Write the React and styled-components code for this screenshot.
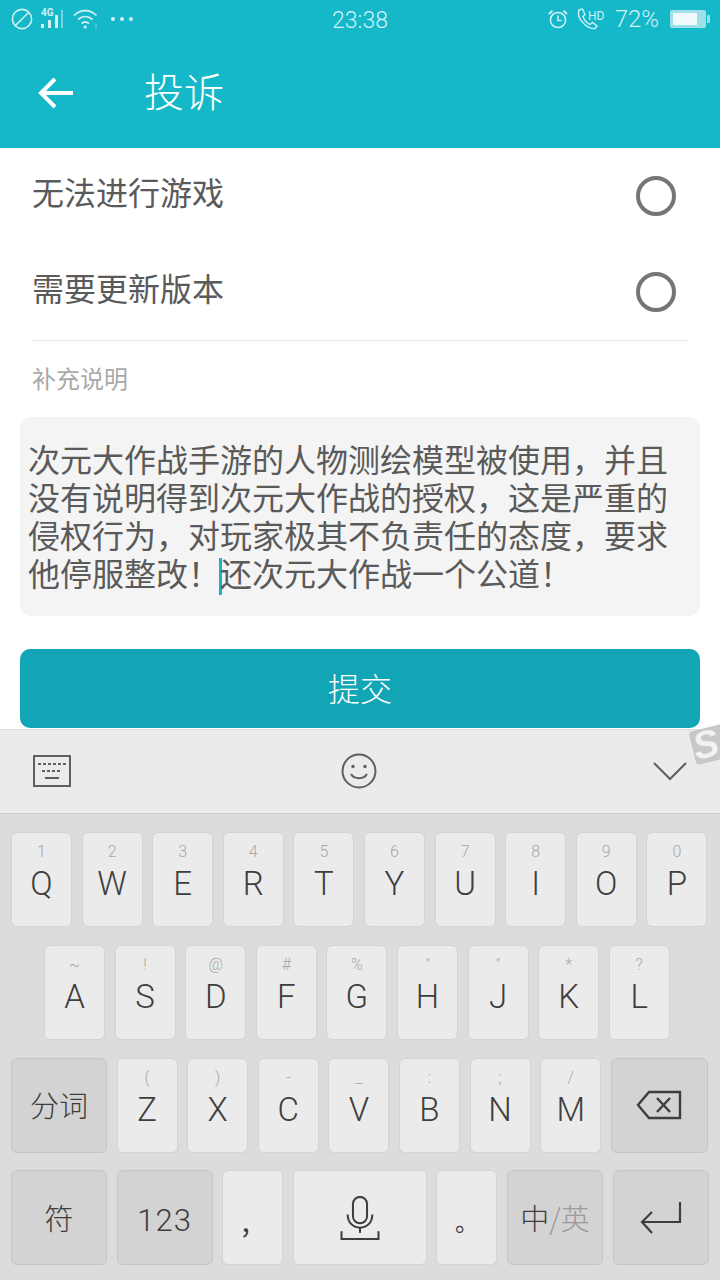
import React from 'react';
import styled, { createGlobalStyle } from 'styled-components';

const cjk = '"Noto Sans CJK SC", "Noto Sans", sans-serif';

const Global = createGlobalStyle`
  html, body {
    margin: 0;
    padding: 0;
    background: #fff;
  }
`;

const Page = styled.div`
  position: relative;
  display: flex;
  flex-direction: column;
  width: 720px;
  height: 1280px;
  overflow: hidden;
  background: #fff;
  font-family: ${cjk};
`;

const Header = styled.header`
  height: 148px;
  background: #14b8c8;
  color: #fff;
`;

const StatusBar = styled.div`
  display: grid;
  grid-template-columns: 1fr auto 1fr;
  align-items: center;
  height: 38px;
  color: #d3f1f5;
`;

const StatusLeft = styled.div`
  display: flex;
  align-items: center;
  gap: 7px;
  padding-left: 11px;
`;

const StatusRight = styled.div`
  display: flex;
  align-items: center;
  justify-content: flex-end;
  padding-right: 10px;
`;

const Time = styled.span`
  font: 300 23px/38px Roboto, sans-serif;
  position: relative;
  top: 2px;
`;

const Percent = styled.span`
  font: 300 24px/38px Roboto, sans-serif;
  margin: 0 11px 0 9px;
`;

const TitleBar = styled.div`
  display: flex;
  align-items: center;
  height: 110px;
  padding-left: 38px;
`;

const Title = styled.h1`
  margin: 0 0 6px 70px;
  font-size: 40px;
  font-weight: 300;
  line-height: 50px;
  letter-spacing: 0;
`;

const Options = styled.div`
  margin: 0 32px;
  border-bottom: 1px solid #e6e6e6;
`;

const Option = styled.div`
  display: flex;
  align-items: center;
  justify-content: space-between;
  height: 96px;
  padding-right: 12px;
  color: #5a5a5a;
  font-size: 32px;
`;

const OptionText = styled.span`
  line-height: 44px;
  margin-bottom: 11px;
  font-weight: 400;
`;

const Radio = styled.span`
  box-sizing: border-box;
  width: 40px;
  height: 40px;
  border: 4px solid #757575;
  border-radius: 50%;
`;

const Label = styled.div`
  box-sizing: border-box;
  margin-left: 32px;
  height: 76px;
  padding-bottom: 4px;
  display: flex;
  align-items: center;
  color: #a9a9a9;
  font-size: 24px;
  font-weight: 400;
`;

const Feedback = styled.div`
  box-sizing: border-box;
  height: 199px;
  margin: 0 20px;
  padding: 22px 8px 0;
  border-radius: 10px;
  background: #f4f4f4;
  color: #5a5a5a;
  font-size: 32px;
  font-weight: 400;
  line-height: 38px;
`;

const FeedbackLine = styled.div`
  white-space: nowrap;
`;

const Caret = styled.span`
  display: inline-block;
  width: 3px;
  height: 37px;
  margin: 0 -2px 0 -1px;
  background: #18b4c4;
  vertical-align: -9px;
`;

const Submit = styled.button`
  display: block;
  height: 79px;
  margin: 33px 20px 0;
  padding: 0 0 4px;
  border: 0;
  border-radius: 10px;
  background: #11a5b5;
  color: #fff;
  font-family: ${cjk};
  font-size: 32px;
  font-weight: 300;
`;

const Keyboard = styled.div`
  flex: 1;
  margin-top: 1px;
  background: #dcdcdc;
`;

const Toolbar = styled.div`
  display: flex;
  align-items: center;
  justify-content: space-between;
  box-sizing: border-box;
  height: 85px;
  padding: 0 33px 2px;
  background: #ebebeb;
  border-top: 1px solid #dcdcdc;
  border-bottom: 1px solid #cdcdcd;
`;

const Rows = styled.div`
  display: flex;
  flex-direction: column;
  gap: 17.7px;
  padding-top: 18.4px;
`;

const KeyRow = styled.div`
  display: flex;
  gap: 9.6px;
  height: 95px;
  padding: 0 0 0 ${(p) => p.$left || 11}px;
`;

const Key = styled.div`
  box-sizing: border-box;
  flex: 0 0 ${(p) => p.$w || 61}px;
  display: flex;
  flex-direction: column;
  align-items: center;
  justify-content: ${(p) => (p.$center ? 'center' : 'flex-start')};
  border: 1px solid ${(p) => (p.$dark ? '#c6c6c6' : '#d3d3d3')};
  border-radius: 6px;
  background: ${(p) => (p.$dark ? '#d3d3d3' : '#ebebeb')};
  color: #3e3e3e;
`;

const Sub = styled.span`
  height: 20px;
  margin-top: 9px;
  color: #a8a8a8;
  font: 300 16px/20px Roboto, sans-serif;
`;

const Letter = styled.span`
  margin-top: 2px;
  font: 300 33px/40px Roboto, sans-serif;
`;

const KeyText = styled.span`
  font-size: 29px;
  font-weight: 300;
  line-height: 40px;
  margin-bottom: 2px;
`;

const Digits = styled.span`
  font: 300 31px/40px Roboto, sans-serif;
  letter-spacing: 1px;
  margin-top: 7px;
`;

const Comma = styled.span`
  font-size: 30px;
  line-height: 40px;
  margin: 2px 14px 0 0;
`;

const FullStop = styled.span`
  font-size: 24px;
  line-height: 40px;
  margin-top: 6px;
`;

const Muted = styled.span`
  color: #9a9a9a;
`;

const SogouBadge = styled.div`
  position: absolute;
  top: 727px;
  left: 692px;
  width: 38px;
  height: 34px;
  border-radius: 3px;
  background: #c8c8c8;
  transform: rotate(-14deg);
  color: #f2f2f2;
  font: italic 700 38px/32px "Liberation Sans", sans-serif;
  padding-left: 1px;
  overflow: hidden;
`;

const NoDisturbIcon = () => (
  <svg width="22" height="22" viewBox="0 0 22 22" fill="none" stroke="currentColor" strokeWidth="1.6">
    <circle cx="11" cy="11" r="9.6" />
    <path d="M4.2 17.8 17.8 4.2" />
  </svg>
);

const SignalIcon = () => (
  <svg width="26" height="22" viewBox="0 0 26 22" fill="currentColor">
    <text x="1" y="8" fontSize="10" fontWeight="700" fontFamily="Roboto, sans-serif">4G</text>
    <rect x="1" y="16" width="3" height="4" />
    <rect x="8" y="12" width="3" height="8" />
    <rect x="15" y="7" width="3" height="13" />
    <rect x="21" y="2" width="2" height="18" opacity="0.5" />
  </svg>
);

const WifiIcon = () => (
  <svg width="26" height="22" viewBox="0 0 26 22" fill="none" stroke="currentColor" strokeWidth="1.7">
    <path d="M1 7.5C7.5 1 17 1 23.5 7.5" />
    <path d="M5 11.5C9.5 7.5 15 7.5 19.5 11.5" />
    <path d="M8.5 15.5C11 13.5 13.5 13.5 16 15.5" />
    <circle cx="12.2" cy="19" r="1.6" fill="currentColor" stroke="none" />
    <path d="M22 17h2M22 20h2" strokeWidth="1" opacity="0.6" />
  </svg>
);

const MoreDots = () => (
  <svg width="24" height="6" viewBox="0 0 24 6" fill="currentColor" style={{ marginLeft: 4 }}>
    <circle cx="3" cy="3" r="2" />
    <circle cx="12" cy="3" r="2" />
    <circle cx="21" cy="3" r="2" />
  </svg>
);

const AlarmIcon = () => (
  <svg width="20" height="20" viewBox="0 0 20 20" fill="none" stroke="currentColor" strokeWidth="1.5">
    <circle cx="10" cy="11" r="7.6" />
    <path d="M10 6.5V11.5H13.5" />
    <path d="M1 5 4.5 1.6M19 5 15.5 1.6" strokeWidth="1.9" />
  </svg>
);

const CallHdIcon = () => (
  <svg width="30" height="22" viewBox="0 0 30 22" fill="none" stroke="currentColor" strokeWidth="1.4" style={{ marginLeft: 8 }}>
    <path d="M3 2 6.5 1 9 6.5 7 8.5C8 11.5 11 15 14 16.5L16.5 14.5 21 18 19 20.5C11 21.5 0 10 3 2Z" />
    <text x="12" y="12" fontSize="12" fontFamily="Roboto, sans-serif" fill="currentColor" stroke="none">HD</text>
  </svg>
);

const BatteryIcon = () => (
  <svg width="40" height="18" viewBox="0 0 40 18">
    <rect x="0" y="0" width="36" height="18" rx="2" fill="#9fe0e8" />
    <rect x="3" y="3" width="24" height="12" fill="#eefafb" />
    <rect x="37" y="5" width="3" height="8" rx="1" fill="#9fe0e8" />
  </svg>
);

const BackArrow = () => (
  <svg width="36" height="32" viewBox="0 0 36 32" fill="none" stroke="#fff" strokeWidth="4">
    <path d="M35 16H3" />
    <path d="M17 2 3 16 17 30" />
  </svg>
);

const KeyboardIcon = () => (
  <svg width="38" height="32" viewBox="0 0 38 32" fill="none" stroke="#5f5f5f">
    <rect x="1" y="1" width="36" height="30" strokeWidth="2" />
    <path d="M5 9H33" strokeWidth="2" strokeDasharray="3 2" />
    <path d="M9 16H29" strokeWidth="2" strokeDasharray="3 2" />
    <path d="M12 23H26" strokeWidth="2" />
  </svg>
);

const SmileIcon = () => (
  <svg width="36" height="36" viewBox="0 0 36 36" fill="none" stroke="#5f5f5f" strokeWidth="2" style={{ marginRight: 6 }}>
    <circle cx="18" cy="18" r="16.5" />
    <circle cx="12" cy="13.5" r="1.7" fill="#5f5f5f" stroke="none" />
    <circle cx="24" cy="13.5" r="1.7" fill="#5f5f5f" stroke="none" />
    <path d="M10 21C13 26.5 23 26.5 26 21" />
  </svg>
);

const ChevronIcon = () => (
  <svg width="34" height="20" viewBox="0 0 34 20" fill="none" stroke="#5f5f5f" strokeWidth="2">
    <path d="M1 2 17 18 33 2" />
  </svg>
);

const BackspaceIcon = () => (
  <svg width="46" height="30" viewBox="0 0 46 30" fill="none" stroke="#3e3e3e" strokeWidth="2.4">
    <path d="M44 2H13L2 15 13 28H44Z" />
    <path d="M21 8 34 22M34 8 21 22" />
  </svg>
);

const MicIcon = () => (
  <svg width="44" height="44" viewBox="0 0 46 50" fill="none" stroke="#3e3e3e" strokeWidth="2.3">
    <rect x="15" y="1" width="16" height="30" rx="8" />
    <path d="M9 21C9 41 37 41 37 21" />
    <path d="M23 36V42" />
    <path d="M2 40V49H44V40" />
  </svg>
);

const EnterIcon = () => (
  <svg width="42" height="34" viewBox="0 0 42 34" fill="none" stroke="#3e3e3e" strokeWidth="2.2">
    <path d="M40 1V21H3" />
    <path d="M12 11 2 21 12 32" />
  </svg>
);

const row1 = [['1', 'Q'], ['2', 'W'], ['3', 'E'], ['4', 'R'], ['5', 'T'], ['6', 'Y'], ['7', 'U'], ['8', 'I'], ['9', 'O'], ['0', 'P']];
const row2 = [['~', 'A'], ['!', 'S'], ['@', 'D'], ['#', 'F'], ['%', 'G'], ['"', 'H'], ['"', 'J'], ['*', 'K'], ['?', 'L']];
const row3 = [['(', 'Z'], [')', 'X'], ['-', 'C'], ['_', 'V'], [':', 'B'], [';', 'N'], ['/', 'M']];

function LetterKey({ sub, letter }) {
  return (
    <Key>
      <Sub>{sub}</Sub>
      <Letter>{letter}</Letter>
    </Key>
  );
}

function App() {
  return (
    <Page>
      <Global />
      <Header>
        <StatusBar>
          <StatusLeft>
            <NoDisturbIcon />
            <SignalIcon />
            <WifiIcon />
            <MoreDots />
          </StatusLeft>
          <Time>23:38</Time>
          <StatusRight>
            <AlarmIcon />
            <CallHdIcon />
            <Percent>72%</Percent>
            <BatteryIcon />
          </StatusRight>
        </StatusBar>
        <TitleBar>
          <BackArrow />
          <Title>投诉</Title>
        </TitleBar>
      </Header>

      <Options>
        <Option>
          <OptionText>无法进行游戏</OptionText>
          <Radio />
        </Option>
        <Option>
          <OptionText>需要更新版本</OptionText>
          <Radio />
        </Option>
      </Options>

      <Label>补充说明</Label>
      <Feedback>
        <FeedbackLine>次元大作战手游的人物测绘模型被使用，并且</FeedbackLine>
        <FeedbackLine>没有说明得到次元大作战的授权，这是严重的</FeedbackLine>
        <FeedbackLine>侵权行为，对玩家极其不负责任的态度，要求</FeedbackLine>
        <FeedbackLine>
          他停服整改！
          <Caret />
          还次元大作战一个公道！
        </FeedbackLine>
      </Feedback>
      <Submit>提交</Submit>

      <Keyboard>
        <Toolbar>
          <KeyboardIcon />
          <SmileIcon />
          <ChevronIcon />
        </Toolbar>
        <Rows>
          <KeyRow>
            {row1.map(([sub, letter]) => (
              <LetterKey key={letter} sub={sub} letter={letter} />
            ))}
          </KeyRow>
          <KeyRow $left={44}>
            {row2.map(([sub, letter]) => (
              <LetterKey key={letter} sub={sub} letter={letter} />
            ))}
          </KeyRow>
          <KeyRow>
            <Key $w={96} $dark $center>
              <KeyText>分词</KeyText>
            </Key>
            {row3.map(([sub, letter]) => (
              <LetterKey key={letter} sub={sub} letter={letter} />
            ))}
            <Key $w={97} $dark $center>
              <BackspaceIcon />
            </Key>
          </KeyRow>
          <KeyRow>
            <Key $w={96} $dark $center>
              <KeyText>符</KeyText>
            </Key>
            <Key $w={96} $dark $center>
              <Digits>123</Digits>
            </Key>
            <Key $center>
              <Comma>,</Comma>
            </Key>
            <Key $w={134} $center>
              <MicIcon />
            </Key>
            <Key $center>
              <FullStop>。</FullStop>
            </Key>
            <Key $w={96} $dark $center>
              <KeyText>
                中<Muted>/英</Muted>
              </KeyText>
            </Key>
            <Key $w={96} $dark $center>
              <EnterIcon />
            </Key>
          </KeyRow>
        </Rows>
      </Keyboard>

      <SogouBadge>S</SogouBadge>
    </Page>
  );
}

export default App;
